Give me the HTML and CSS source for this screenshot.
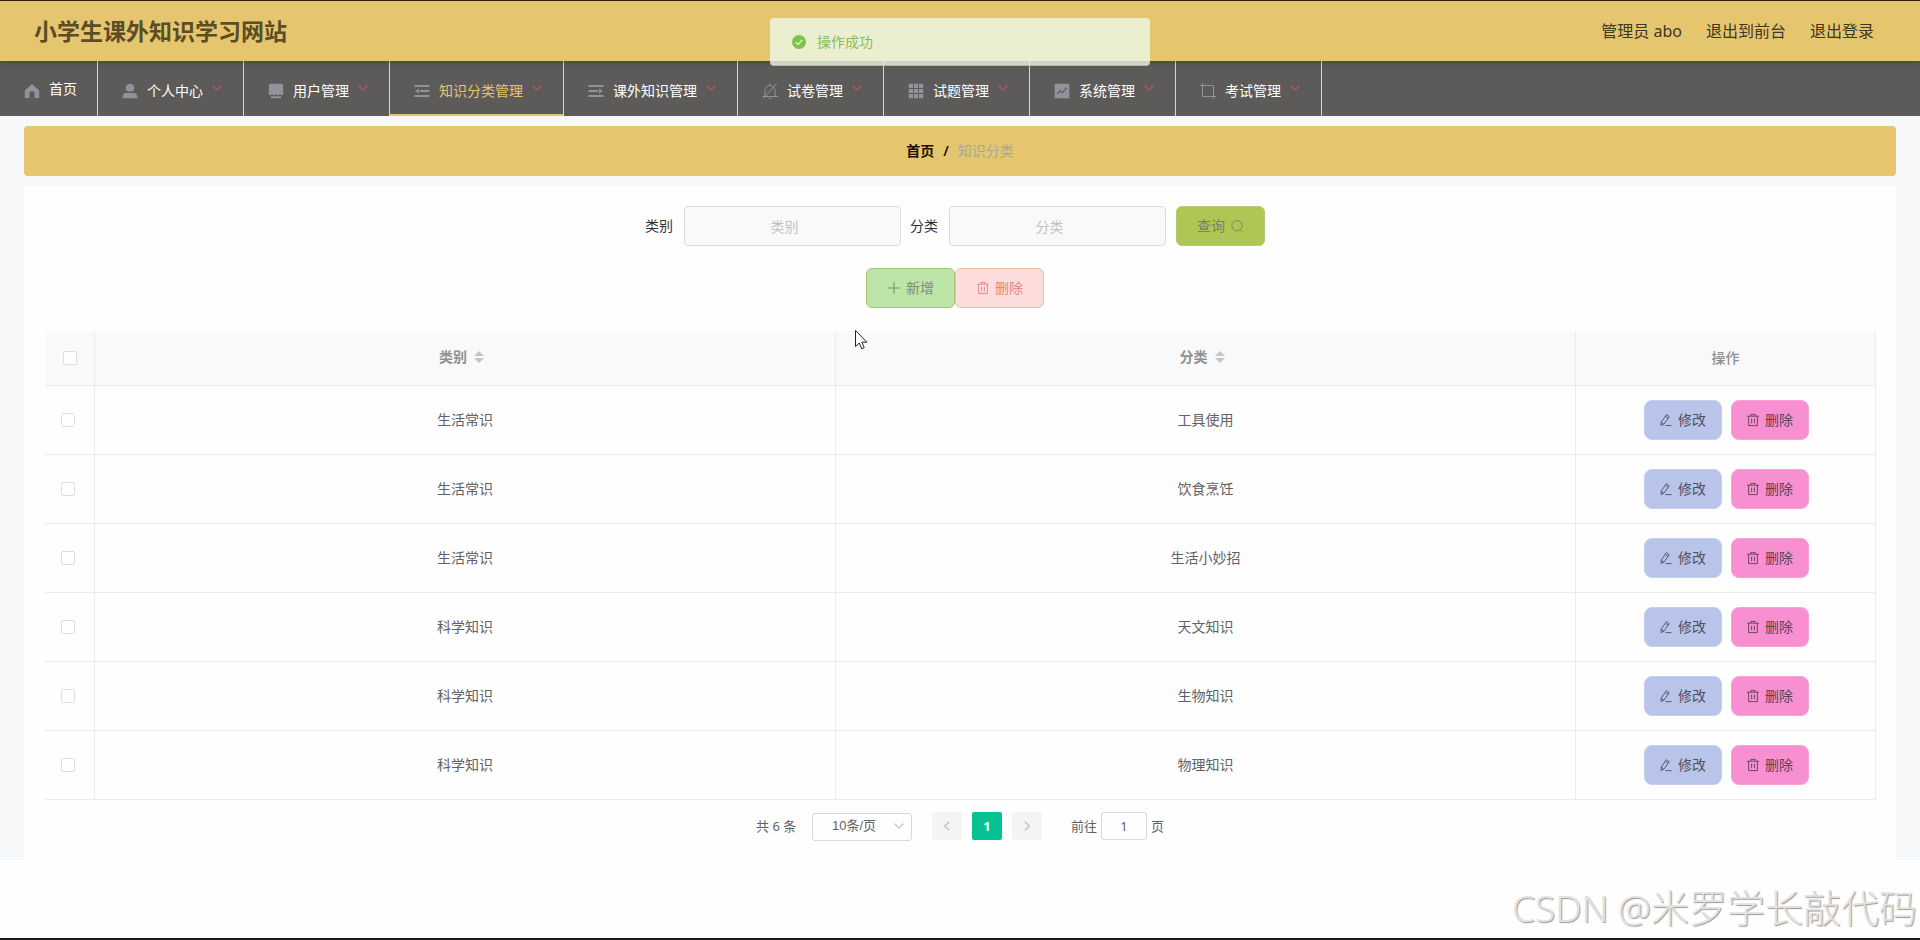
FILE: index.html
```html
<!DOCTYPE html>
<html lang="zh-CN">
<head>
  <meta charset="UTF-8">
  <meta name="viewport" content="width=device-width, initial-scale=1.0">
  <title>小学生课外知识学习网站</title>
  <link rel="stylesheet" href="styles.css">
</head>
<body>
  <!-- Shared icons -->
  <svg class="sprite" xmlns="http://www.w3.org/2000/svg">
    <symbol id="i-down" viewBox="0 0 12 12"><path d="M1.5 3.5 6 8l4.5-4.5" fill="none" stroke="currentColor" stroke-width="1.200"/></symbol>
    <symbol id="i-edit" viewBox="0 0 14 14"><path d="M2.2 9.2 7.4 1.7l2.8 1.9-5.2 7.5-3 1.4zM6.3 3.3l2.8 1.9M2.1 9.3l2.8 1.9M6.5 12.6h6" fill="none" stroke="currentColor" stroke-width=".9"/></symbol>
    <symbol id="i-trash" viewBox="0 0 14 14"><path d="M1 3.2h12M2.6 3.2v9.4h8.8V3.2M4.8 3V1.4h4.4V3M5.6 5.6v4.6M8.4 5.6v4.6" fill="none" stroke="currentColor" stroke-width=".9"/></symbol>
  </svg>

  <header class="header">
    <h1 class="title">小学生课外知识学习网站</h1>
    <div class="user">
      <span>管理员 abo</span>
      <span>退出到前台</span>
      <span>退出登录</span>
    </div>
  </header>

  <nav class="menu">
    <div class="menu-item home">
      <svg class="icon" viewBox="0 0 16 16"><path d="M8 1 .8 7.600V15h4.700v-4.300a2.500 2.500 0 0 1 5 0V15h4.700V7.600z" fill="currentColor"/></svg>
      <span>首页</span>
    </div>
    <div class="menu-item">
      <svg class="icon" viewBox="0 0 16 16"><path d="M8 .7a4.3 4.3 0 0 1 2.3 7.9H5.7A4.3 4.3 0 0 1 8 .7zM4 10h8c2 0 3.3 1.700 3.300 3.600V15.300H.7v-1.700C.7 11.700 2 10 4 10z" fill="currentColor"/></svg>
      <span>个人中心</span>
      <svg class="arrow"><use href="#i-down"/></svg>
    </div>
    <div class="menu-item">
      <svg class="icon" viewBox="0 0 16 16"><path d="M2.500.7h11a1.500 1.500 0 0 1 1.500 1.500l.3 8.800c-.8 1.500-2.600 1.500-3.600.3-1 1.200-2.700 1.200-3.700 0-1 1.200-2.700 1.200-3.700 0-1 1.200-2.800 1.200-3.600-.3L1 2.200A1.500 1.500 0 0 1 2.500.7zM3 13.200h10v2.100H3z" fill="currentColor"/></svg>
      <span>用户管理</span>
      <svg class="arrow"><use href="#i-down"/></svg>
    </div>
    <div class="menu-item active">
      <svg class="icon" viewBox="0 0 16 16"><path d="M.5 2h15v2H.5zM6 7h9.500v2H6zM.5 12h15v2H.5zM1 8l4-2.500v5z" fill="currentColor"/></svg>
      <span>知识分类管理</span>
      <svg class="arrow"><use href="#i-down"/></svg>
    </div>
    <div class="menu-item">
      <svg class="icon" viewBox="0 0 16 16"><path d="M.5 2h15v2H.5zM.5 7H10v2H.5zM.5 12h15v2H.5zM15 8l-4-2.500v5z" fill="currentColor"/></svg>
      <span>课外知识管理</span>
      <svg class="arrow"><use href="#i-down"/></svg>
    </div>
    <div class="menu-item">
      <svg class="icon" viewBox="0 0 16 16"><path d="M.5 13.500h15.500M3 13.500V7.500a5 5 0 0 1 10 0v6M8 2.500V.5M1.500 15.500 14.500.5M6.700 15.500h2.600" fill="none" stroke="currentColor"/></svg>
      <span>试卷管理</span>
      <svg class="arrow"><use href="#i-down"/></svg>
    </div>
    <div class="menu-item">
      <svg class="icon" viewBox="0 0 16 16"><path d="M.8.8h4.200V5H.8zM5.900.8h4.200V5H5.900zM11 .8h4.200V5H11zM.8 5.900h4.200v4.200H.8zM5.900 5.900h4.200v4.200H5.900zM11 5.900h4.200v4.200H11zM.8 11h4.200v4.200H.8zM5.900 11h4.200v4.200H5.900zM11 11h4.200v4.200H11z" fill="currentColor"/></svg>
      <span>试题管理</span>
      <svg class="arrow"><use href="#i-down"/></svg>
    </div>
    <div class="menu-item">
      <svg class="icon" viewBox="0 0 16 16"><path d="M.7.7h14.600v14.600H.7z" fill="currentColor"/><path d="m3.300 11 3-3.300 2.200 1.900 4-4.600" fill="none" stroke="#5d5b59" stroke-width="1.200"/></svg>
      <span>系统管理</span>
      <svg class="arrow"><use href="#i-down"/></svg>
    </div>
    <div class="menu-item">
      <svg class="icon" viewBox="0 0 16 16"><path d="M0 2.500h13.500V16M2.500 0v13.500H16" fill="none" stroke="currentColor"/></svg>
      <span>考试管理</span>
      <svg class="arrow"><use href="#i-down"/></svg>
    </div>
  </nav>

  <main class="main">
    <div class="breadcrumb"><b>首页</b><b class="slash">/</b><span>知识分类</span></div>

    <section class="content">
      <form class="search">
        <label>类别</label>
        <input type="text" placeholder="类别">
        <label>分类</label>
        <input type="text" placeholder="分类">
        <button type="button" class="btn query">查询
          <svg viewBox="0 0 14 14"><path d="M7 1.500a5.200 5.200 0 1 0 0 10.400A5.200 5.200 0 0 0 7 1.500zM10.300 10.500l2 2" fill="none" stroke="currentColor" stroke-width=".9"/></svg>
        </button>
      </form>

      <div class="actions">
        <button type="button" class="btn add"><svg viewBox="0 0 14 14"><path d="M7 1v12M1 7h12" fill="none" stroke="currentColor"/></svg>新增</button>
        <button type="button" class="btn remove"><svg><use href="#i-trash"/></svg>删除</button>
      </div>

      <table class="table">
        <colgroup><col class="c-check"><col class="c-type"><col class="c-name"><col class="c-ops"></colgroup>
        <thead>
          <tr>
            <th><i class="check"></i></th>
            <th><div class="sortable">类别<i class="sort"></i></div></th>
            <th><div class="sortable">分类<i class="sort"></i></div></th>
            <th class="ops-head">操作</th>
          </tr>
        </thead>
        <tbody id="rows"></tbody>
      </table>

      <div class="pagination">
        <span class="total">共 6 条</span>
        <div class="select"><span>10条/页</span><svg><use href="#i-down"/></svg></div>
        <div class="pager">
          <button type="button"><svg viewBox="0 0 12 12"><path d="M8 1.800 3.800 6 8 10.200" fill="none" stroke="currentColor" stroke-width="1.600"/></svg></button>
          <button type="button" class="current">1</button>
          <button type="button"><svg viewBox="0 0 12 12"><path d="M4 1.800 8.200 6 4 10.200" fill="none" stroke="currentColor" stroke-width="1.600"/></svg></button>
        </div>
        <div class="jump">前往<span class="jump-input">1</span>页</div>
      </div>
    </section>
  </main>

  <!-- Success toast -->
  <div class="message">
    <svg viewBox="0 0 14 14"><circle cx="7" cy="7" r="7" fill="#7cc54a"/><path d="m3.800 7.200 2.300 2.200 4.200-4.400" fill="none" stroke="#eef3d8" stroke-width="1.200"/></svg>
    <span>操作成功</span>
  </div>

  <svg class="cursor" viewBox="0 0 13 20"><path d="M.5.5v16l3.800-3.500 2.400 5.800 2.500-1.100-2.400-5.500h5.100z" fill="#fff" stroke="#222"/></svg>
  <div class="watermark"><span>CSDN @</span>米罗学长敲代码</div>
  <div class="bottom-edge"></div>

  <script>
    const rows = [
      ['生活常识', '工具使用'],
      ['生活常识', '饮食烹饪'],
      ['生活常识', '生活小妙招'],
      ['科学知识', '天文知识'],
      ['科学知识', '生物知识'],
      ['科学知识', '物理知识']
    ];

    document.getElementById('rows').innerHTML = rows.map(([type, name]) => `
      <tr>
        <td><i class="check"></i></td>
        <td>${type}</td>
        <td>${name}</td>
        <td>
          <div class="ops">
            <button type="button" class="btn edit"><svg><use href="#i-edit"/></svg>修改</button>
            <button type="button" class="btn del"><svg><use href="#i-trash"/></svg>删除</button>
          </div>
        </td>
      </tr>`).join('');
  </script>
</body>
</html>
```
FILE: styles.css
```css
* {
  box-sizing: border-box;
}

body {
  margin: 0;
  height: 940px;
  overflow: hidden;
  background: #fefefe;
  border-top: 1px solid #35200f;
  font-family: "Noto Sans", "Noto Sans CJK SC", sans-serif;
  font-size: 14px;
  line-height: 20px;
  color: #606266;
}

button,
input {
  font: inherit;
}

.sprite {
  position: absolute;
  width: 0;
  height: 0;
}

/* Header */
.header {
  position: relative;
  z-index: 1;
  height: 60px;
  padding: 0 46px 0 34px;
  display: flex;
  align-items: center;
  justify-content: space-between;
  background: #e6c56f;
  box-shadow: 0 1px 6px rgba(0, 0, 0, 0.3);
}

.title {
  margin: 0;
  font-size: 23px;
  line-height: 60px;
  color: #5b4d26;
}

.user {
  display: flex;
  gap: 24px;
  font-size: 16px;
  line-height: 60px;
  color: #40381f;
}

/* Navigation */
.menu {
  display: flex;
  height: 55px;
  background: #5d5b59;
}

.menu-item {
  display: flex;
  align-items: center;
  padding: 4px 20px 0;
  border-right: 1px solid #d8d8d8;
  color: #fff;
}

.menu-item .icon {
  width: 16px;
  height: 16px;
  margin: 0 9px 0 4px;
  color: #909399;
}

.home span {
  margin-top: -3px;
}

.menu-item .arrow {
  width: 12px;
  height: 12px;
  margin: -5px 0 0 8px;
  color: #b8527f;
}

.menu-item.active {
  color: #e6c56f;
  box-shadow: inset 0 -2px #e6c56f;
}

/* Page body */
.main {
  height: 744px;
  padding: 10px 24px 0;
  background: #f6f8fa;
}

.breadcrumb {
  display: flex;
  align-items: center;
  justify-content: center;
  height: 50px;
  padding-bottom: 1px;
  border-radius: 4px;
  background: #e6c56f;
  color: #a5a79a;
}

.breadcrumb b {
  color: #16120a;
  font-weight: 600;
}

.breadcrumb .slash {
  margin: 0 9px;
}

.content {
  height: 674px;
  margin-top: 10px;
  padding: 20px 20px 0 21px;
  background: #fefefe;
}

.search {
  display: flex;
  align-items: center;
  padding-left: 600px;
  color: #303133;
}

.search label {
  width: 28px;
  margin-right: 11px;
}

.search input {
  width: 217px;
  height: 40px;
  margin-right: 9px;
  border: 1px solid #dcdcdc;
  border-radius: 4px;
  background: #f9f9f9;
  text-align: center;
  padding: 0 32px 0 16px;
}

.search input::placeholder {
  color: #c0c1c6;
}

.btn {
  display: flex;
  align-items: center;
  justify-content: center;
  width: 89px;
  height: 40px;
  padding: 0;
  gap: 5px;
  border: 1px solid;
  border-radius: 6px;
  white-space: nowrap;
}

.btn svg {
  width: 14px;
  height: 14px;
}

.query {
  margin-left: 1px;
  background: #afc554;
  border-color: #aecb7a;
  color: #7b8168;
}

.actions {
  display: flex;
  justify-content: center;
  margin-top: 22px;
  padding-right: 11px;
}

.add {
  background: #bde5a8;
  border-color: #a3c56b;
  color: #828a7c;
}

.remove {
  background: #fddddb;
  border-color: #ecc0a0;
  color: #e58484;
}

/* Table */
.table {
  width: 1831px;
  margin-top: 23px;
  table-layout: fixed;
  border-collapse: separate;
  border-spacing: 0;
  text-align: center;
}

.c-check { width: 50px; }
.c-type { width: 741px; }
.c-name { width: 740px; }
.c-ops { width: 300px; }

.table th,
.table td {
  padding: 0;
  border: solid #ebebeb;
  border-width: 0 1px 1px 0;
}

.table th {
  height: 55px;
  background: #f9f9f9;
  color: #8f9092;
  font-weight: 600;
}

.table th.ops-head {
  font-weight: 500;
}

.table td {
  height: 69px;
}

.check {
  display: block;
  width: 14px;
  height: 14px;
  margin-left: 16px;
  border: 1px solid #dedede;
  border-radius: 2px;
  background: #fff;
}

th .check {
  margin-left: 18px;
}

.sortable {
  display: flex;
  align-items: center;
  justify-content: center;
  padding: 0 7px 2px 0;
}

/* Up and down triangles */
.sort {
  width: 10px;
  margin-left: 7px;
}

.sort::before,
.sort::after {
  content: "";
  display: block;
  border: 5px solid transparent;
}

.sort::before {
  border-top: 0;
  border-bottom-color: #c4c4c6;
  margin-bottom: 2px;
}

.sort::after {
  border-bottom: 0;
  border-top-color: #c4c4c6;
}

.ops {
  display: flex;
  justify-content: center;
  gap: 9px;
  padding-left: 1px;
}

.ops .btn {
  width: 78px;
  border-radius: 8px;
  color: #4f5060;
}

.ops .edit {
  background: #b8c4e9;
  border-color: #c5cfee;
}

.ops .del {
  background: #f88fd0;
  border-color: #f9a0d4;
  color: #5b4257;
}

/* Pagination */
.pagination {
  display: flex;
  align-items: center;
  height: 28px;
  margin-top: 12px;
  padding-left: 711px;
  font-size: 13px;
}

.total {
  width: 56px;
}

.select {
  display: flex;
  align-items: center;
  justify-content: space-between;
  width: 100px;
  height: 28px;
  margin-top: 2px;
  padding: 0 6px 2px 19px;
  border: 1px solid #d8d9dc;
  border-radius: 3px;
  font-family: "Liberation Sans", "Noto Sans CJK SC", sans-serif;
}

.select svg {
  width: 12px;
  height: 12px;
  color: #c0c4cc;
}

.pager {
  display: flex;
  gap: 10px;
  margin-left: 20px;
}

.pager button {
  display: flex;
  align-items: center;
  justify-content: center;
  width: 30px;
  height: 28px;
  padding: 0;
  border: 0;
  border-radius: 2px;
  background: #f4f4f5;
  color: #c0c4cc;
}

.pager svg {
  width: 12px;
  height: 12px;
}

.pager .current {
  background: #05c293;
  color: #fff;
  font-weight: 700;
}

.jump {
  display: flex;
  align-items: center;
  margin-left: 29px;
}

.jump-input {
  width: 46px;
  height: 28px;
  margin: 0 4px;
  border: 1px solid #d8d9dc;
  border-radius: 3px;
  line-height: 26px;
  text-align: center;
}

/* Overlays */
.message {
  position: absolute;
  z-index: 2;
  top: 18px;
  left: 770px;
  display: flex;
  align-items: center;
  gap: 11px;
  width: 380px;
  height: 48px;
  padding-left: 22px;
  border-radius: 4px;
  background: rgba(238, 248, 232, 0.8);
  box-shadow: inset 0 -1px rgba(150, 160, 140, 0.5);
  color: #85bd5c;
}

.message svg {
  width: 14px;
  height: 14px;
}

.cursor {
  position: absolute;
  top: 330px;
  left: 855px;
  width: 13px;
  height: 20px;
}

.watermark {
  position: absolute;
  right: 3px;
  bottom: 4px;
  font-size: 38px;
  line-height: 56px;
  font-weight: 300;
  color: #e2e2e2;
  text-shadow: 1px 1px 1px #999;
}

.watermark span {
  font-size: 37px;
}

.bottom-edge {
  position: absolute;
  bottom: 0;
  left: 0;
  width: 100%;
  height: 2px;
  background: #1c1a1e;
}
```
